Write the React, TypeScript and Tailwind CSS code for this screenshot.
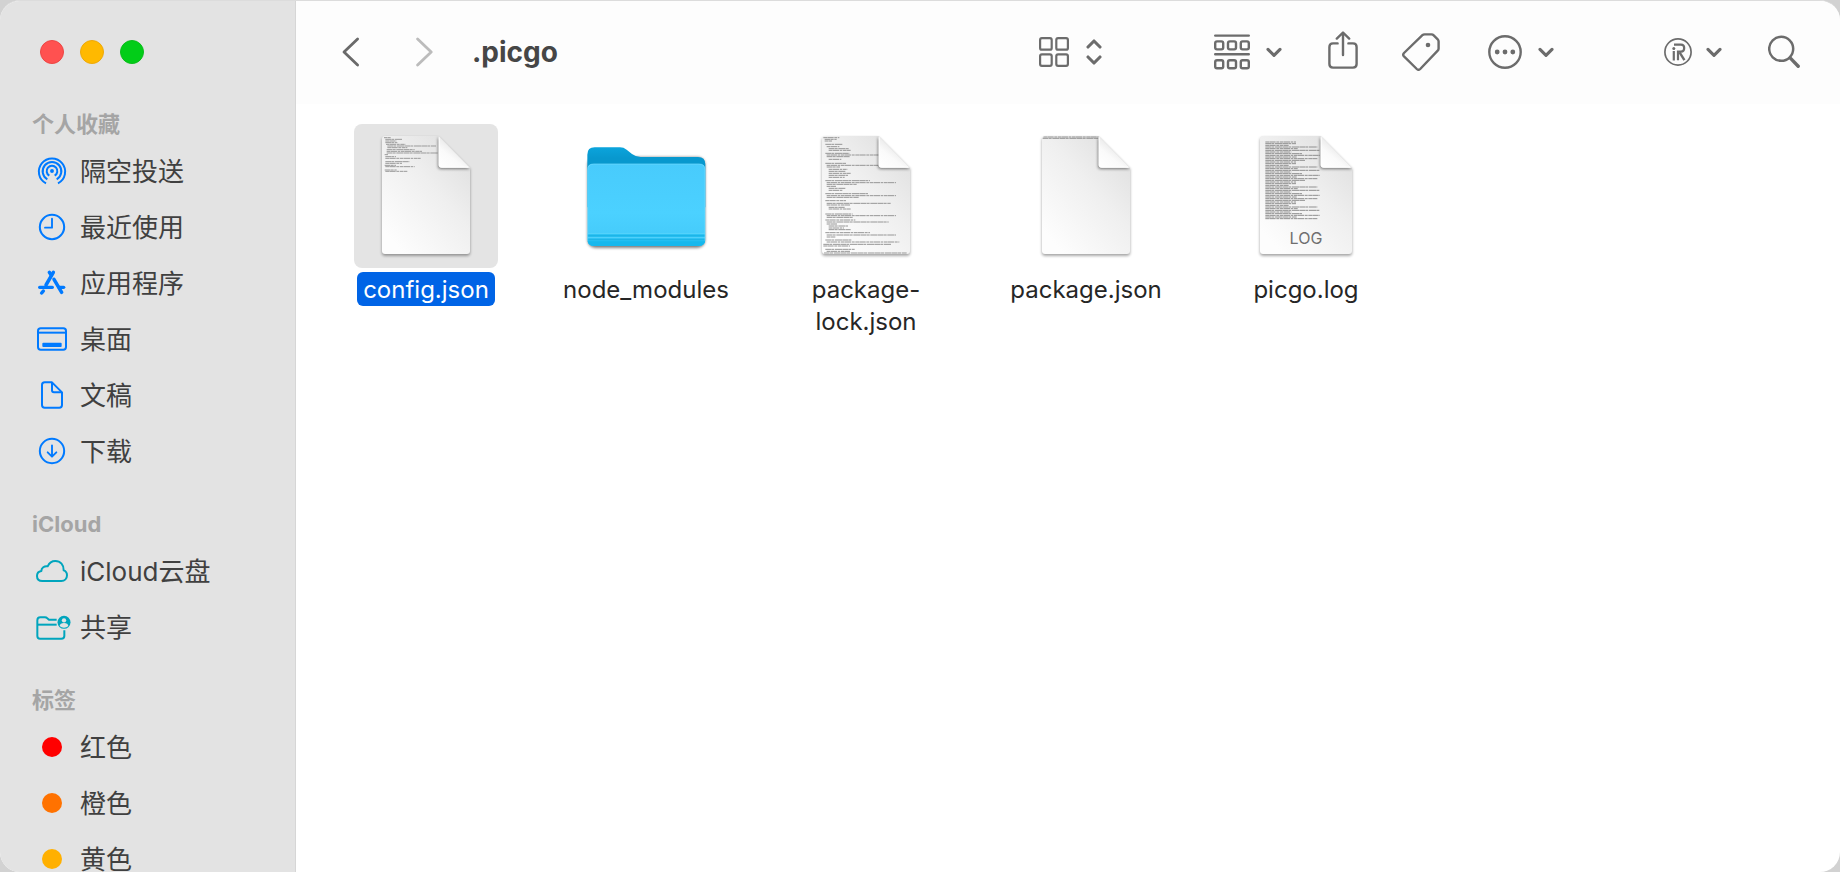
import { useState } from "react";
import type { ReactNode } from "react";

type Row = [x: number, y: number, length: number];

/* ---------- Sidebar icons ---------- */

const AirDropIcon = () => (
  <svg viewBox="0 0 96 84" className="h-7 w-8" fill="none" stroke="#007aff" strokeWidth="6" strokeLinecap="butt">
    <circle cx="48" cy="42" r="5.8" fill="#007aff" stroke="none" />
    <path d="M40 56a16 16 0 1 1 16 0" />
    <path d="M34 67a28 28 0 1 1 28 0" />
    <path d="M30 79a39.5 39.5 0 1 1 36 0" />
  </svg>
);

const ClockIcon = () => (
  <svg viewBox="0 0 96 84" className="h-7 w-8" fill="none" stroke="#007aff" strokeWidth="6.2">
    <circle cx="48" cy="42" r="36.5" />
    <path d="M48 17v27H27" strokeLinecap="round" strokeLinejoin="round" strokeWidth="5.6" />
  </svg>
);

const AppsIcon = () => (
  <svg viewBox="0 0 96 84" className="h-7 w-8" fill="none" stroke="#007aff" strokeWidth="10.5" strokeLinecap="round">
    <path d="M52 10 30 48" />
    <path d="M40 10l6 9" />
    <path d="M11 55h38" strokeWidth="10" />
    <path d="M69 55h14" strokeWidth="10" />
    <path d="M54 31l23 39" />
    <path d="M22 66l-5 6" />
  </svg>
);

const DesktopIcon = () => (
  <svg viewBox="0 0 96 84" className="h-7 w-8" fill="none" stroke="#007aff" strokeWidth="6">
    <rect x="6" y="10" width="84" height="64" rx="8" />
    <path d="M6 23h84" />
    <rect x="19" y="53" width="58" height="13" rx="3" fill="#007aff" stroke="none" />
  </svg>
);

const DocumentIcon = () => (
  <svg viewBox="0 0 96 84" className="h-7 w-8" fill="none" stroke="#007aff" strokeWidth="6" strokeLinejoin="round">
    <path d="M26 4h22l30 30v38q0 8-8 8H26q-8 0-8-8V12q0-8 8-8z" />
    <path d="M48 5v23q0 6 6 6h23" />
  </svg>
);

const DownloadIcon = () => (
  <svg viewBox="0 0 96 84" className="h-7 w-8" fill="none" stroke="#007aff" strokeWidth="6" strokeLinecap="round" strokeLinejoin="round">
    <circle cx="48" cy="42" r="36.5" />
    <path d="M48 25v33M35 46l13 13 13-13" strokeWidth="5.6" />
  </svg>
);

const CloudIcon = () => (
  <svg viewBox="0 0 96 84" className="h-7 w-8 overflow-visible" fill="none" stroke="#00a5bd" strokeWidth="6" strokeLinejoin="round">
    <path d="M19 72C8 72 3 65 3 57c0-8 6-14 13-15 0-9 9-16 19-14 4-9 12-16 23-16 15 0 26 12 25 28 6 2 10 8 10 15 0 10-7 17-17 17z" />
  </svg>
);

const SharedFolderIcon = () => (
  <svg viewBox="0 0 104 84" className="-mr-1 h-7 w-9 shrink-0" preserveAspectRatio="xMinYMid meet" fill="none" stroke="#00a5bd" strokeWidth="6">
    <path d="M62 20H39l-6-5q-2-2-6-2H13q-9 0-9 9v47q0 8 8 8h64q9 0 9-8V52" />
    <path d="M4 35h58" />
    <circle cx="84" cy="28" r="19.5" fill="#00a5bd" stroke="none" />
    <circle cx="84" cy="22" r="6.5" fill="#e3e3e3" stroke="none" />
    <path d="M71 39q1-9 13-9t13 9q-5 5-13 5t-13-5z" fill="#e3e3e3" stroke="none" />
  </svg>
);

const Dot = ({ className }: { className: string }) => (
  <span className="flex w-8 justify-center">
    <span className={`size-5 rounded-full ${className}`} />
  </span>
);

/* ---------- Toolbar icons ---------- */

const ChevronDown = () => (
  <svg viewBox="0 0 16 12" className="h-3 w-4" fill="none" stroke="#6c6c6c" strokeWidth="3.1" strokeLinecap="round" strokeLinejoin="round">
    <path d="M2 3.4l6 6 6-6" />
  </svg>
);

const IconGridIcon = () => (
  <svg viewBox="0 0 30 30" className="size-[30px]" fill="none" stroke="#6c6c6c" strokeWidth="2.2">
    <rect x="1.1" y="1.1" width="11.6" height="11.6" rx="1.8" />
    <rect x="17.3" y="1.1" width="11.6" height="11.6" rx="1.8" />
    <rect x="1.1" y="17.3" width="11.6" height="11.6" rx="1.8" />
    <rect x="17.3" y="17.3" width="11.6" height="11.6" rx="1.8" />
  </svg>
);

const UpDownIcon = () => (
  <svg viewBox="0 0 16 26" className="h-[26px] w-4" fill="none" stroke="#6c6c6c" strokeWidth="3.1" strokeLinecap="round" strokeLinejoin="round">
    <path d="M2 8l6-6 6 6M2 18l6 6 6-6" />
  </svg>
);

const GroupIcon = () => (
  <svg viewBox="0 0 36 36" className="size-9" fill="none" stroke="#6c6c6c" strokeWidth="2.4">
    <path d="M1.2 1.6h33.6M1.2 20.3h33.6" strokeLinecap="round" />
    {[7.4, 26.2].map((y) =>
      [1.2, 14, 26.8].map((x) => <rect key={`${x}-${y}`} x={x} y={y} width="8" height="8" rx="1.8" />),
    )}
  </svg>
);

const ShareIcon = () => (
  <svg viewBox="0 0 30 38" className="h-[38px] w-[30px]" fill="none" stroke="#6c6c6c" strokeWidth="2.4" strokeLinecap="round" strokeLinejoin="round">
    <path d="M9.6 12.4H5q-3.6 0-3.6 3.6v17q0 3.6 3.6 3.6h20q3.6 0 3.6-3.6V16q0-3.6-3.6-3.6h-4.6" />
    <path d="M15 24V1.8M8.8 7.6L15 1.5l6.2 6.1" />
  </svg>
);

const TagIcon = () => (
  <svg viewBox="0 0 38 38" className="size-[38px]" fill="none" stroke="#6c6c6c" strokeWidth="2.4" strokeLinejoin="round">
    <path d="M20.4 2.2Q21.3 1.4 22.6 1.4H29.4Q30.8 1.4 31.7 2.3L35.7 6.3Q36.6 7.2 36.6 8.5V15.4Q36.6 16.8 35.7 17.7L18.2 36Q16.5 37.6 14.8 36L2 23.4Q.4 21.7 2 20z" />
    <circle cx="26" cy="12" r="2.3" fill="#6c6c6c" stroke="none" />
  </svg>
);

const MoreIcon = () => (
  <svg viewBox="0 0 34 34" className="size-[34px]" fill="none" stroke="#6c6c6c" strokeWidth="2.4">
    <circle cx="17" cy="17" r="15.7" />
    {[9.2, 17, 24.8].map((x) => (
      <circle key={x} cx={x} cy="17" r="2.4" fill="#6c6c6c" stroke="none" />
    ))}
  </svg>
);

const RightMenuIcon = () => (
  <svg viewBox="0 0 28 28" className="size-7" fill="none" stroke="#6c6c6c">
    <circle cx="14" cy="14" r="13.1" strokeWidth="1.7" />
    <path d="M10 6.6h7q3.2 0 3.2 3.4 0 3.6-3.2 3.6h-3v8.6" strokeWidth="2.2" />
    <path d="M15.6 14.4l4.8 7.8" strokeWidth="2.4" />
    <path d="M9.8 13v9.4" strokeWidth="2.2" />
    <circle cx="9.8" cy="10.4" r="1.5" fill="#6c6c6c" stroke="none" />
  </svg>
);

const SearchIcon = () => (
  <svg viewBox="0 0 32 34" className="h-[34px] w-8" fill="none" stroke="#6c6c6c" strokeLinecap="round">
    <circle cx="13.2" cy="13.8" r="12" strokeWidth="2.5" />
    <path d="M22.6 23.4l7.6 7.8" strokeWidth="3.4" />
  </svg>
);

/* ---------- File thumbnails ---------- */

const CONFIG_ROWS: Row[] = [
  [90, 41, 20], [94, 46, 50], [94, 51, 34], [94, 56, 36], [96, 61, 58], [100, 66, 146], [100, 71, 60],
  [98, 77, 84], [98, 82, 106], [98, 87, 154], [92, 92, 10],
  [94, 98, 32], [94, 103, 106], [94, 113, 72], [94, 118, 50], [92, 124, 34], [94, 128, 88],
  [92, 138, 36], [94, 142, 66],
];

const LOCK_ROWS: Row[] = [
  [88, 41, 48], [92, 46, 36], [92, 51, 22], [94, 61, 52], [98, 68, 38], [104, 74, 60], [104, 79, 66],
  [94, 88, 72], [98, 93, 158], [98, 98, 70], [104, 106, 38], [94, 118, 62], [98, 124, 156], [98, 129, 40],
  [104, 136, 56], [104, 142, 50], [104, 148, 66], [104, 154, 58], [104, 160, 48],
  [94, 170, 134], [98, 176, 208], [98, 181, 90], [98, 187, 28], [104, 193, 50], [104, 199, 42],
  [94, 209, 128], [98, 215, 208], [98, 220, 96], [94, 230, 62], [98, 238, 192], [98, 243, 70],
  [104, 250, 48], [104, 255, 66], [94, 270, 82], [98, 275, 208], [98, 280, 80],
  [94, 288, 90], [98, 294, 186], [98, 300, 32], [104, 306, 58], [104, 312, 46], [104, 317, 66],
  [94, 326, 134], [98, 333, 208], [98, 339, 26], [94, 348, 80], [98, 354, 218], [88, 361, 204],
  [88, 366, 80], [94, 376, 88], [98, 382, 70], [90, 387, 248],
];

const LOG_ROWS: Row[] = Array.from({ length: 47 }, (_, i): Row => {
  const lengths = [92, 92, 70, 156, 98, 162, 78, 110, 164, 94, 156, 120];
  return [94, 54 + i * 5, lengths[i % lengths.length]];
});

const JSON_ROWS: Row[] = [[88, 39, 166], [86, 43, 168]];

function Page({ id, rows, tone, wide, badge }: { id: string; rows: Row[]; tone: string; wide?: boolean; badge?: string }) {
  const l = wide ? 78 : 84;
  const r = 432 - l;
  const f = r - 94;
  const outline = `M${l + 9} 36H${f}L${r} 131V381q0 9-9 9H${l + 9}q-9 0-9-9V45q0-9 9-9z`;
  return (
    <svg viewBox="0 0 432 432" className="size-36" aria-hidden="true">
      <defs>
        <linearGradient id={`${id}-sheet`} x1="1" y1="0.1" x2="0.25" y2="1">
          <stop offset="0" stopColor="#dedede" />
          <stop offset="0.45" stopColor="#efefef" />
          <stop offset="1" stopColor="#fdfdfd" />
        </linearGradient>
        <linearGradient id={`${id}-fold`} x1="0.65" y1="0.3" x2="0.1" y2="1">
          <stop offset="0" stopColor="#e3e3e3" />
          <stop offset="0.5" stopColor="#fafafa" />
          <stop offset="1" stopColor="#ffffff" />
        </linearGradient>
        <filter id={`${id}-shade`} x="-20%" y="-20%" width="140%" height="140%">
          <feGaussianBlur stdDeviation="5" />
        </filter>
        <clipPath id={`${id}-clip`}>
          <path d={outline} />
        </clipPath>
      </defs>
      <path d={outline} fill="#000" opacity="0.38" filter={`url(#${id}-shade)`} transform="translate(0 5)" />
      <path d={outline} fill={`url(#${id}-sheet)`} />
      <g clipPath={`url(#${id}-clip)`}>
        {rows.map(([x, y, length], i) => (
          <path
            key={i}
            d={`M${x} ${y}h${length}`}
            stroke={tone}
            strokeWidth="3"
            strokeDasharray={i % 2 ? "17 1 9 2 21 1" : "11 1 19 2 8 2"}
          />
        ))}
        <path d={`M${f - 2} 40V126q0 9 9 9H${r}z`} fill="#000" opacity="0.5" filter={`url(#${id}-shade)`} />
      </g>
      <path d={`M${f} 36L${r} 131H${f + 7}q-7 0-7-7z`} fill={`url(#${id}-fold)`} />
      <path d={`M${f + 1.5} 40V123q0 6.5 6.5 6.5H${r - 5}`} fill="none" stroke="#fff" strokeWidth="3" />
      {badge && (
        <text x="216" y="360" textAnchor="middle" fontSize="48" fill="#6f6f6f" fontFamily="Inter, sans-serif">
          {badge}
        </text>
      )}
    </svg>
  );
}

const Folder = () => (
  <svg viewBox="0 0 432 432" className="size-36" aria-hidden="true">
    <defs>
      <linearGradient id="folder-back" x1="0" y1="0" x2="0" y2="1">
        <stop offset="0" stopColor="#0ba4dc" />
        <stop offset="0.18" stopColor="#0898ce" />
        <stop offset="1" stopColor="#0898ce" />
      </linearGradient>
      <linearGradient id="folder-front" x1="0" y1="0" x2="0" y2="1">
        <stop offset="0" stopColor="#48cbfc" />
        <stop offset="0.6" stopColor="#4bd1ff" />
        <stop offset="0.84" stopColor="#46ccfb" />
      </linearGradient>
      <filter id="folder-shade" x="-10%" y="-10%" width="120%" height="125%">
        <feGaussianBlur stdDeviation="4" />
      </filter>
      <clipPath id="folder-clip">
        <path d="M58 119H376q18 0 18 18V346q0 20-20 20H60q-20 0-20-20V137q0-18 18-18z" />
      </clipPath>
    </defs>
    <rect x="41" y="100" width="352" height="271" rx="22" fill="#000" opacity="0.55" filter="url(#folder-shade)" />
    <path d="M62 70H138q11 0 20 7l16 13q12 9 26 9H372q22 0 22 22V250H40V92q0-22 22-22z" fill="url(#folder-back)" />
    <g clipPath="url(#folder-clip)">
      <path d="M40 119H394V366H40z" fill="url(#folder-front)" />
      <path d="M40 329H394V366H40z" fill="#27c0f2" />
      <path d="M40 329H394M40 341H394" stroke="#58d4fc" strokeWidth="3" />
      <path d="M40 335H394M40 347H394" stroke="#1cb4e7" strokeWidth="3" />
      <path d="M40 352H394V366H40z" fill="#16b8ed" />
    </g>
    <path d="M41 350V138q0-18 18-18H375q18 0 18 18V350" fill="none" stroke="#73dcff" strokeWidth="2" />
  </svg>
);

/* ---------- Data ---------- */

const sections: { title: string; items: { label: string; icon: ReactNode }[] }[] = [
  {
    title: "个人收藏",
    items: [
      { label: "隔空投送", icon: <AirDropIcon /> },
      { label: "最近使用", icon: <ClockIcon /> },
      { label: "应用程序", icon: <AppsIcon /> },
      { label: "桌面", icon: <DesktopIcon /> },
      { label: "文稿", icon: <DocumentIcon /> },
      { label: "下载", icon: <DownloadIcon /> },
    ],
  },
  {
    title: "iCloud",
    items: [
      { label: "iCloud云盘", icon: <CloudIcon /> },
      { label: "共享", icon: <SharedFolderIcon /> },
    ],
  },
  {
    title: "标签",
    items: [
      { label: "红色", icon: <Dot className="bg-[#ff0000]" /> },
      { label: "橙色", icon: <Dot className="bg-[#ff7200]" /> },
      { label: "黄色", icon: <Dot className="bg-[#ffb000]" /> },
    ],
  },
];

const files: { name: string; thumb: ReactNode }[] = [
  { name: "config.json", thumb: <Page id="config" rows={CONFIG_ROWS} tone="#9b9b9b" /> },
  { name: "node_modules", thumb: <Folder /> },
  { name: "package-lock.json", thumb: <Page id="lock" rows={LOCK_ROWS} tone="#969696" /> },
  { name: "package.json", thumb: <Page id="package" rows={JSON_ROWS} tone="#969696" /> },
  { name: "picgo.log", thumb: <Page id="log" rows={LOG_ROWS} tone="#909090" wide badge="LOG" /> },
];

/* ---------- Layout ---------- */

function Sidebar() {
  return (
    <aside className="flex w-[296px] shrink-0 flex-col overflow-hidden border-r border-[#d6d6d6] bg-[#e3e3e3]">
      <div className="flex h-[104px] shrink-0 items-start gap-4 px-10 pt-[39px]">
        <button aria-label="关闭" className="size-6 rounded-full border border-[#ec4644] bg-[#ff5150]" />
        <button aria-label="最小化" className="size-6 rounded-full border border-[#eda90a] bg-[#ffb900]" />
        <button aria-label="缩放" className="size-6 rounded-full border border-[#0bbd1b] bg-[#02cd18]" />
      </div>
      <nav className="flex flex-col gap-[26px]">
        {sections.map((section) => (
          <section key={section.title}>
            <h2 className="flex h-[38px] items-center pl-8 text-[22px] font-bold text-[#a5a5a5]">{section.title}</h2>
            <ul>
              {section.items.map((item) => (
                <li key={item.label}>
                  <a href="#" className="flex h-14 items-center gap-3 pl-9 text-[26px] text-[#404040]">
                    {item.icon}
                    <span>{item.label}</span>
                  </a>
                </li>
              ))}
            </ul>
          </section>
        ))}
      </nav>
    </aside>
  );
}

function Toolbar() {
  return (
    <header className="flex h-[103px] shrink-0 items-center bg-[#fdfdfd] pr-10 pb-0.5 pl-11">
      <div className="flex items-center gap-14">
        <button aria-label="后退">
          <svg viewBox="0 0 20 30" className="h-[30px] w-5" fill="none" stroke="#6a6a6a" strokeWidth="2.8" strokeLinecap="round" strokeLinejoin="round">
            <path d="M17.6 2L4 15l13.6 13" />
          </svg>
        </button>
        <button aria-label="前进">
          <svg viewBox="0 0 20 30" className="h-[30px] w-5" fill="none" stroke="#bcbcbc" strokeWidth="2.8" strokeLinecap="round" strokeLinejoin="round">
            <path d="M1.6 2l13.6 13L1.6 28" />
          </svg>
        </button>
      </div>
      <h1 className="ml-9 flex-1 text-[28px] font-bold text-[#464646]">.picgo</h1>
      <button aria-label="显示方式" className="flex items-center gap-[17px]">
        <IconGridIcon />
        <UpDownIcon />
      </button>
      <button aria-label="分组" className="ml-28 flex items-center gap-4">
        <GroupIcon />
        <ChevronDown />
      </button>
      <button aria-label="共享" className="ml-[46px] pb-1">
        <ShareIcon />
      </button>
      <button aria-label="标签" className="ml-11">
        <TagIcon />
      </button>
      <button aria-label="更多" className="ml-12 flex items-center gap-4">
        <MoreIcon />
        <ChevronDown />
      </button>
      <button aria-label="右键菜单" className="ml-[110px] flex items-center gap-[14px]">
        <RightMenuIcon />
        <ChevronDown />
      </button>
      <button aria-label="搜索" className="ml-[46px]">
        <SearchIcon />
      </button>
    </header>
  );
}

export default function App() {
  const [selected, setSelected] = useState("config.json");
  return (
    <div className="h-screen bg-[#d2d2d2] font-['Inter','Noto_Sans_CJK_SC',sans-serif]">
      <div className="flex h-full overflow-hidden rounded-[20px] border-t border-[#dcdcdc] bg-white">
        <Sidebar />
        <div className="flex min-w-0 flex-1 flex-col">
          <Toolbar />
          <main className="flex flex-wrap content-start px-5 pt-5">
            {files.map((file) => {
              const active = file.name === selected;
              return (
                <button
                  key={file.name}
                  onClick={() => setSelected(file.name)}
                  className="flex w-[220px] flex-col items-center gap-1"
                >
                  <span className={`rounded-lg ${active ? "bg-[#e4e4e4]" : ""}`}>{file.thumb}</span>
                  <span
                    className={`max-w-[180px] rounded-md px-1.5 pt-0.5 text-2xl leading-8 ${
                      active ? "bg-[#0064e6] text-white" : "text-[#262626]"
                    }`}
                  >
                    {file.name}
                  </span>
                </button>
              );
            })}
          </main>
        </div>
      </div>
    </div>
  );
}
